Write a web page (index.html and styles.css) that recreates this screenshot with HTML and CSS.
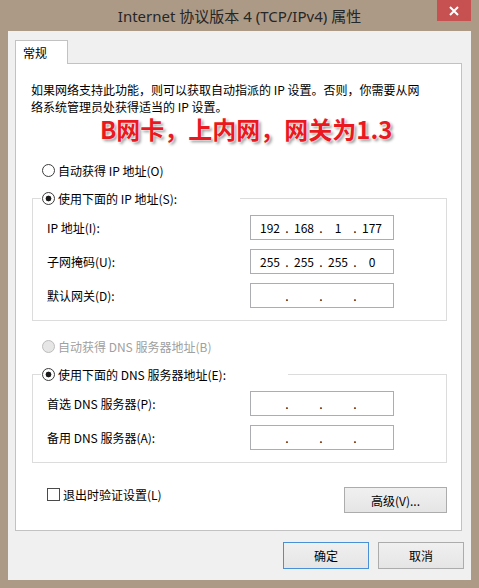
FILE: index.html
```html
<!DOCTYPE html>
<html lang="zh-CN">
<head>
  <meta charset="UTF-8" />
  <title>Internet 协议版本 4 (TCP/IPv4) 属性</title>
  <link rel="stylesheet" href="styles.css">
</head>
<body>
  <div class="window">
    <div class="titlebar">
      <div></div>
      <div class="title">Internet 协议版本 4 (TCP/IPv4) 属性</div>
      <div class="close">
        <svg width="10" height="10" viewBox="0 0 10 10"><path d="M1 1L9 9M9 1L1 9" stroke="#fff" stroke-width="2"/></svg>
      </div>
    </div>

    <div class="client">
      <div class="tab">常规</div>
      <div class="panel">
        <p class="desc">如果网络支持此功能，则可以获取自动指派的 IP 设置。否则，你需要从网<br>络系统管理员处获得适当的 IP 设置。</p>
        <div class="note">B网卡，上内网，网关为1.3</div>

        <div class="option option-first"><span class="radio"></span>自动获得 IP 地址(O)</div>
        <div class="group">
          <div class="legend legend-ip"><span class="radio checked"></span>使用下面的 IP 地址(S):</div>
          <div class="fields">
            <div class="field">
              <span class="field-label">IP 地址(I):</span>
              <div class="ip-box"><span class="seg">192</span><span class="dot">.</span><span class="seg">168</span><span class="dot">.</span><span class="seg">1</span><span class="dot">.</span><span class="seg">177</span></div>
            </div>
            <div class="field">
              <span class="field-label">子网掩码(U):</span>
              <div class="ip-box"><span class="seg">255</span><span class="dot">.</span><span class="seg">255</span><span class="dot">.</span><span class="seg">255</span><span class="dot">.</span><span class="seg">0</span></div>
            </div>
            <div class="field">
              <span class="field-label">默认网关(D):</span>
              <div class="ip-box"><span class="seg"></span><span class="dot">.</span><span class="seg"></span><span class="dot">.</span><span class="seg"></span><span class="dot">.</span><span class="seg"></span></div>
            </div>
          </div>
        </div>

        <div class="option option-disabled"><span class="radio"></span>自动获得 DNS 服务器地址(B)</div>
        <div class="group">
          <div class="legend legend-dns"><span class="radio checked"></span>使用下面的 DNS 服务器地址(E):</div>
          <div class="fields">
            <div class="field">
              <span class="field-label">首选 DNS 服务器(P):</span>
              <div class="ip-box"><span class="seg"></span><span class="dot">.</span><span class="seg"></span><span class="dot">.</span><span class="seg"></span><span class="dot">.</span><span class="seg"></span></div>
            </div>
            <div class="field">
              <span class="field-label">备用 DNS 服务器(A):</span>
              <div class="ip-box"><span class="seg"></span><span class="dot">.</span><span class="seg"></span><span class="dot">.</span><span class="seg"></span><span class="dot">.</span><span class="seg"></span></div>
            </div>
          </div>
        </div>

        <div class="extras">
          <div class="check-row"><span class="checkbox"></span>退出时验证设置(L)</div>
          <button class="btn btn-advanced">高级(V)...</button>
        </div>
      </div>

      <div class="dialog-buttons">
        <button class="btn btn-default">确定</button>
        <button class="btn">取消</button>
      </div>
    </div>
  </div>
</body>
</html>
```

FILE: styles.css
```css
body {
  margin: 0;
  font-family: "Noto Sans CJK SC", "Noto Sans", sans-serif;
  font-size: 12px;
  color: #000;
}
.window {
  width: 479px;
  height: 588px;
  box-sizing: border-box;
  background: #ac9a87;
  padding: 0 8px 8px;
  display: flex;
  flex-direction: column;
}
.titlebar {
  height: 31px;
  display: grid;
  grid-template-columns: 1fr auto 1fr;
  align-items: center;
}
.title {
  font-family: "Noto Sans", "Noto Sans CJK SC", sans-serif;
  font-size: 15px;
  color: #262626;
}
.close {
  justify-self: end;
  align-self: start;
  width: 34px;
  height: 21px;
  background: #c75050;
  display: flex;
  align-items: center;
  justify-content: center;
}
.client {
  flex: 1;
  background: #f0f0f0;
  padding: 9px 7px 0;
  display: flex;
  flex-direction: column;
}
.tab {
  width: 53px;
  height: 24px;
  box-sizing: border-box;
  border: 1px solid #c2c2c2;
  border-bottom: none;
  background: #fff;
  padding-left: 7px;
  line-height: 23px;
  margin-bottom: -1px;
  position: relative;
  z-index: 1;
}
.panel {
  width: 447px;
  height: 468px;
  box-sizing: border-box;
  border: 1px solid #c2c2c2;
  background: #fff;
  padding: 17px 14px 0 15px;
}
.desc {
  margin: 0;
  line-height: 17px;
}
.note {
  height: 24px;
  line-height: 24px;
  margin-top: 2px;
  padding-left: 69px;
  font-size: 24px;
  font-weight: bold;
  color: #ea1820;
  text-shadow: 0 0 2px #fff, 0 0 2px #fff, 2px 2px 3px rgba(0,0,0,0.45);
}
.option {
  display: flex;
  align-items: center;
  height: 20px;
  padding-left: 11px;
}
.option-first { margin-top: 19px; }
.option-disabled {
  margin-top: 15px;
  color: #a0a0a0;
}
.radio {
  width: 13px;
  height: 13px;
  box-sizing: border-box;
  border: 1px solid #3c3c3c;
  border-radius: 50%;
  background: #fff;
  margin-right: 3px;
}
.radio.checked {
  background: radial-gradient(circle, #1a1a1a 0 2.6px, #fff 3.2px);
}
.option-disabled .radio {
  border-color: #bcbcbc;
  background: #e6e6e6;
}
.group {
  margin: 18px 0 0 1px;
  border: 1px solid #dcdcdc;
  padding: 0 0 12px 14px;
}
.legend {
  display: flex;
  align-items: center;
  height: 20px;
  margin: -11px 0 0 -6px;
  padding-left: 1px;
  background: #fff;
}
.legend-ip { width: 198px; }
.legend-dns { width: 246px; }
.fields {
  display: flex;
  flex-direction: column;
  gap: 9px;
  margin-top: 7px;
}
.field {
  display: flex;
  align-items: center;
}
.field-label {
  width: 203px;
}
.ip-box {
  width: 144px;
  height: 25px;
  box-sizing: border-box;
  border: 1px solid #abadb3;
  display: flex;
  align-items: center;
  padding-left: 6px;
}
.seg {
  width: 26px;
  text-align: center;
}
.dot {
  width: 8px;
  text-align: center;
}
.extras {
  display: flex;
  justify-content: space-between;
  align-items: flex-start;
  margin: 24px 0 0 16px;
}
.check-row {
  display: flex;
  align-items: center;
  height: 13px;
  margin-top: 1px;
}
.checkbox {
  width: 13px;
  height: 13px;
  box-sizing: border-box;
  border: 1px solid #4a4a4a;
  background: #fff;
  margin-right: 3px;
}
.btn {
  font-family: "Noto Sans CJK SC", "Noto Sans", sans-serif;
  font-size: 12px;
  color: #000;
  border: 1px solid #acacac;
  background: linear-gradient(#f0f0f0, #e5e5e5);
  padding: 0;
}
.btn-advanced {
  width: 103px;
  height: 26px;
}
.dialog-buttons {
  display: flex;
  justify-content: flex-end;
  gap: 9px;
  margin-top: 11px;
}
.dialog-buttons .btn {
  width: 86px;
  height: 27px;
}
.btn-default {
  border-color: #4a90d6;
}
```
